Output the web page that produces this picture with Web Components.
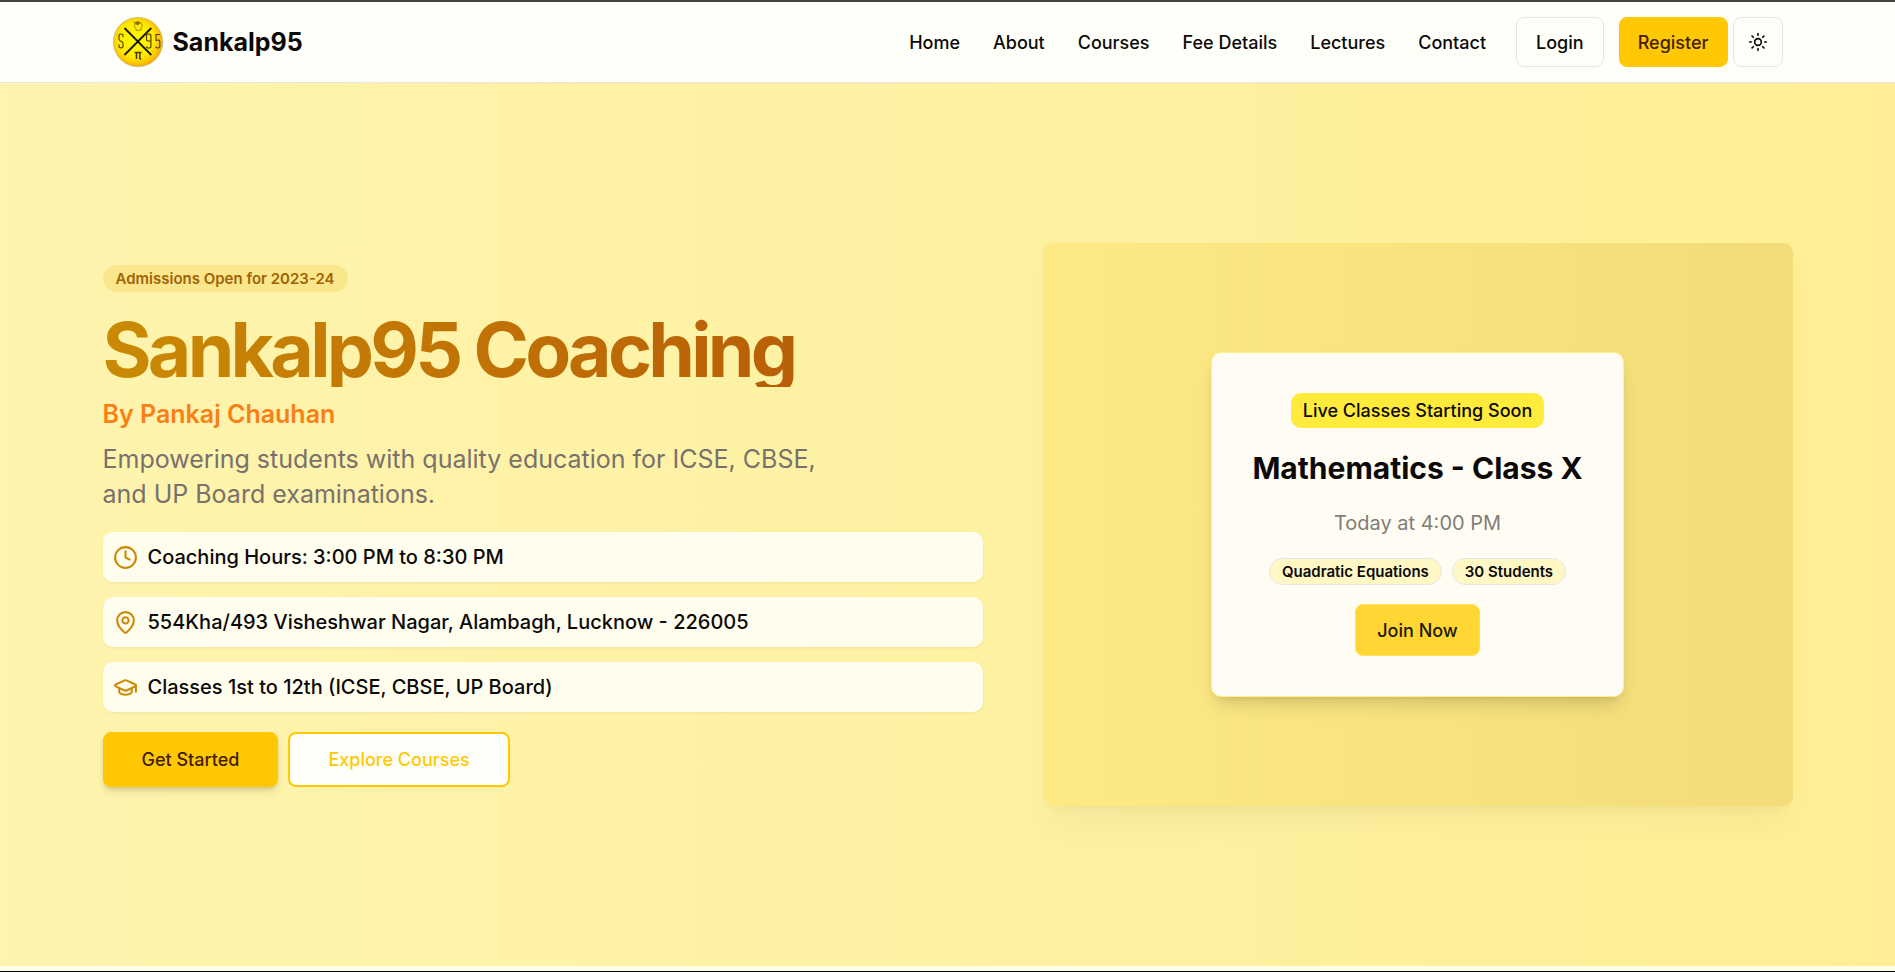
<!DOCTYPE html>
<html lang="en">
<head>
<meta charset="utf-8">
<meta name="viewport" content="width=device-width, initial-scale=1">
<title>Sankalp95 Coaching</title>
<style>
  html, body { margin: 0; }
  body {
    --gold: #ffc803; --gold-text: #422006; --ink: #0c0a09; --muted: #78716c;
    --paper: #fffffa; --line: #e5e5e5; --ochre: #ca8a04;
    font-family: Inter, "Liberation Sans", sans-serif;
    color: var(--ink); background: #fffee8;
  }
</style>
</head>
<body>
<sankalp-page></sankalp-page>
<script>
const define = (name, html) => {
  const t = document.createElement('template');
  t.innerHTML = html;
  customElements.define(name, class extends HTMLElement {
    constructor() {
      super();
      this.attachShadow({ mode: 'open' }).appendChild(t.content.cloneNode(true));
    }
  });
};

define('brand-logo', `
  <style>
    :host { display: block; }
    a { display: flex; align-items: center; gap: 10px; color: inherit; text-decoration: none; font-size: 25px; line-height: 35px; font-weight: 700; }
    svg { width: 50px; height: 50px; display: block; }
  </style>
  <a href="#home">
    <svg viewBox="0 0 50 50" aria-hidden="true">
      <defs><radialGradient id="g" cx="46%" cy="46%" r="60%">
        <stop offset="0" stop-color="#fff900"/><stop offset=".6" stop-color="#ffea00"/><stop offset="1" stop-color="#f59e06"/>
      </radialGradient></defs>
      <circle cx="25" cy="25" r="24.6" fill="url(#g)" stroke="#b9a36a" stroke-width=".6"/>
      <path d="M11.500 11 38.300 38M38.300 11 11.500 38" stroke="#1d1700" stroke-width="1.800" fill="none"/>
      <g fill="none" stroke="#4a3a00" stroke-width="1.100">
        <path d="M10 20v-2q0-1-2-1t-2 1v4q0 1.500 2 2.200t2 2.200v3q0 1.500-2 1.500t-2-1.500v-2"/>
        <path d="M38 24h-3q-1.500 0-1.500-1.500v-4q0-1.500 2.200-1.500t2.200 1.500v11q0 1.500-2.200 1.500t-2.200-1.500"/>
        <path d="M47 17.500h-4v6q3.800-1.500 3.800 1.500v4.500q0 1.500-2 1.500t-2-1.500"/>
        <path d="M21.500 35.500h7M23.500 36v6M26.800 36v5q0 1 1.400 .8" stroke-width="1.600"/>
      </g>
      <g fill="none" stroke="#8a6d00" stroke-width=".8">
        <path d="M23 13.500v-2q-2-1-1.500-3l1-2q3-3 6 0 2 3-.5 5v1.500z"/>
        <path d="M20.500 5l2 1 1.500-1.500 3 1-2 2.500-2-1z" fill="#8a6d00"/>
      </g>
    </svg>
    <slot></slot>
  </a>`);

define('nav-link', `
  <style>
    :host { display: block; }
    a { display: block; color: inherit; text-decoration: none; font-size: 18px; line-height: 25px; font-weight: 500; }
  </style>
  <a href="#"><slot></slot></a>`);

define('ui-button', `
  <style>
    :host { display: block; }
    button {
      display: flex; align-items: center; justify-content: center; box-sizing: border-box;
      height: var(--h, 50px); padding: 0 var(--px, 19px); margin: 0;
      font: 500 18px/25px Inter, "Liberation Sans", sans-serif; white-space: nowrap;
      color: var(--ink); background: var(--paper);
      border: 1px solid var(--line); border-radius: 8px; cursor: pointer;
    }
    :host([kind="primary"]) button { color: var(--gold-text); background: var(--gold); border-color: var(--gold); }
    :host([kind="outline"]) button { color: var(--gold); border: 2px solid var(--gold); }
    :host([raised]) button { box-shadow: 0 5px 8px -1px rgb(0 0 0 / .12), 0 3px 5px -2px rgb(0 0 0 / .12); }
    :host([kind="join"]) button { color: #1c1a05; background: #ffd633; border-color: #ffe05c; }
    :host([square]) button { width: 50px; padding: 0; }
  </style>
  <button type="button"><slot></slot></button>`);

define('sun-icon', `
  <style>:host { display: block; } svg { display: block; width: 20px; height: 20px; }</style>
  <svg viewBox="0 0 24 24" fill="none" stroke="currentColor" stroke-width="2" stroke-linecap="round" stroke-linejoin="round" role="img" aria-label="Toggle theme">
    <circle cx="12" cy="12" r="4"/><path d="M12 2v2M12 20v2M4.930 4.930l1.410 1.410M17.660 17.660l1.410 1.410M2 12h2M20 12h2M6.340 17.660l-1.410 1.410M19.070 4.930l-1.410 1.410"/>
  </svg>`);

define('site-header', `
  <style>
    :host { display: block; background: var(--paper); border-top: 2px solid #454340; border-bottom: 1px solid var(--line); }
    .bar { box-sizing: border-box; max-width: 1750px; margin: 0 auto; padding: 15px 40px; display: flex; align-items: center; justify-content: space-between; }
    .right, nav { display: flex; align-items: center; }
    nav { gap: 33px; margin-right: 30px; }
    .login { margin-right: 15px; }
    .register { margin-right: 5px; --px: 18px; }
  </style>
  <div class="bar">
    <brand-logo>Sankalp95</brand-logo>
    <div class="right">
      <nav>
        <nav-link>Home</nav-link><nav-link>About</nav-link><nav-link>Courses</nav-link>
        <nav-link>Fee Details</nav-link><nav-link>Lectures</nav-link><nav-link>Contact</nav-link>
      </nav>
      <ui-button class="login">Login</ui-button>
      <ui-button class="register" kind="primary">Register</ui-button>
      <ui-button square><sun-icon></sun-icon></ui-button>
    </div>
  </div>`);

define('info-row', `
  <style>
    :host { display: flex; align-items: center; gap: 10px; padding: 10px; border-radius: 10px;
      background: #fffeee; box-shadow: 0 1px 3px rgb(0 0 0 / .06); font-size: 20px; line-height: 30px; font-weight: 500; }
    ::slotted(svg) { width: 25px; height: 25px; flex: none; color: var(--ochre); }
  </style>
  <slot name="icon"></slot><span><slot></slot></span>`);

define('ui-chip', `
  <style>
    :host { display: flex; align-items: center; box-sizing: border-box; height: 27px; padding: 0 12px; border: 1px solid var(--line); border-radius: 14px;
      background: #fff8c5; font-size: 15px; line-height: 20px; font-weight: 600; white-space: nowrap; }
    :host([soft]) { color: #a16207; background: #fae78b; border-color: #fae78b; }
  </style>
  <slot></slot>`);

define('hero-copy', `
  <style>
    :host { display: flex; flex-direction: column; align-items: flex-start; }
    .tag { height: 30px; display: flex; align-items: flex-end; margin-bottom: 20px; }
    h1 { align-self: stretch; margin: 0 0 10px; font-size: 75px; line-height: 75px; font-weight: 700; letter-spacing: -0.05em;
      color: transparent; background: linear-gradient(to right, #ca8a04, #b45309); background-clip: text; -webkit-background-clip: text; }
    h2 { margin: 0 0 10px; font-size: 25px; line-height: 35px; font-weight: 600; color: #f97f16; }
    p { margin: 0 0 20px; max-width: 750px; font-size: 25px; line-height: 35px; color: var(--muted); }
    .rows { align-self: stretch; display: grid; gap: 15px; margin-bottom: 20px; }
    .actions { display: flex; gap: 10px; --h: 55px; --px: 38px; }
  </style>
  <div class="tag"><ui-chip soft>Admissions Open for 2023-24</ui-chip></div>
  <h1>Sankalp95 Coaching</h1>
  <h2>By Pankaj Chauhan</h2>
  <p>Empowering students with quality education for ICSE, CBSE, and UP Board examinations.</p>
  <div class="rows">
    <info-row><svg slot="icon" viewBox="0 0 24 24" fill="none" stroke="currentColor" stroke-width="2" stroke-linecap="round" stroke-linejoin="round"><circle cx="12" cy="12" r="10"/><path d="M12 6v6l4 2"/></svg>Coaching Hours: 3:00 PM to 8:30 PM</info-row>
    <info-row><svg slot="icon" viewBox="0 0 24 24" fill="none" stroke="currentColor" stroke-width="2" stroke-linecap="round" stroke-linejoin="round"><path d="M20 10c0 4.993-5.539 10.193-7.399 11.799a1 1 0 0 1-1.202 0C9.539 20.193 4 14.993 4 10a8 8 0 0 1 16 0"/><circle cx="12" cy="10" r="3"/></svg>554Kha/493 Visheshwar Nagar, Alambagh, Lucknow - 226005</info-row>
    <info-row><svg slot="icon" viewBox="0 0 24 24" fill="none" stroke="currentColor" stroke-width="2" stroke-linecap="round" stroke-linejoin="round"><path d="M21.420 10.922a1 1 0 0 0-.019-1.838L12.830 5.180a2 2 0 0 0-1.660 0L2.600 9.080a1 1 0 0 0 0 1.832l8.570 3.908a2 2 0 0 0 1.660 0z"/><path d="M22 10v6"/><path d="M6 12.500V16a6 3 0 0 0 12 0v-3.500"/></svg>Classes 1st to 12th (ICSE, CBSE, UP Board)</info-row>
  </div>
  <div class="actions">
    <ui-button kind="primary" raised>Get Started</ui-button>
    <ui-button kind="outline">Explore Courses</ui-button>
  </div>`);

define('live-class', `
  <style>
    :host { display: flex; align-items: center; justify-content: center; aspect-ratio: 4 / 3; border-radius: 10px;
      background: linear-gradient(to right, #fdea85, #f3dc78);
      box-shadow: 0 25px 31px -6px rgb(0 0 0 / .03), 0 10px 12px -7px rgb(0 0 0 / .04); }
    article { display: flex; flex-direction: column; align-items: center; gap: 20px; padding: 40px; border: 1px solid #fff08a; border-radius: 10px;
      background: #fffcf4; box-shadow: 0 12px 19px -4px rgb(0 0 0 / .13), 0 5px 8px -5px rgb(0 0 0 / .13); }
    .live { padding: 5px 12px; border-radius: 10px; background: #ffeb3b; font-size: 18px; line-height: 25px; font-weight: 500; }
    h3 { margin: 0; font-size: 30px; line-height: 40px; font-weight: 700; }
    .time { margin: 0; font-size: 20px; line-height: 30px; color: #827c77; }
    .chips { display: flex; gap: 10px; }
    ui-button { --h: 52px; --px: 21px; margin-top: -1px; }
  </style>
  <article>
    <div class="live">Live Classes Starting Soon</div>
    <h3>Mathematics - Class X</h3>
    <p class="time">Today at 4:00 PM</p>
    <div class="chips"><ui-chip>Quadratic Equations</ui-chip><ui-chip>30 Students</ui-chip></div>
    <ui-button kind="join">Join Now</ui-button>
  </article>`);

define('hero-section', `
  <style>
    :host { flex: 1; display: flex; align-items: center; justify-content: center; background: linear-gradient(to right, #fff4ae, #fdf1a1 55%, #ffee95); }
    .grid { box-sizing: border-box; width: 100%; max-width: 1750px; padding: 0 30px; display: grid; grid-template-columns: minmax(0, 1fr) minmax(0, 750px); gap: 60px; align-items: center; }
    @media (max-width: 1100px) { .grid { grid-template-columns: minmax(0, 1fr); } }
  </style>
  <div class="grid"><hero-copy></hero-copy><live-class></live-class></div>`);

define('sankalp-page', `
  <style>
    :host { box-sizing: border-box; min-height: 100vh; display: flex; flex-direction: column; padding-bottom: 5px; border-bottom: 1px solid #000; }
  </style>
  <site-header></site-header>
  <hero-section></hero-section>`);
</script>
</body>
</html>
